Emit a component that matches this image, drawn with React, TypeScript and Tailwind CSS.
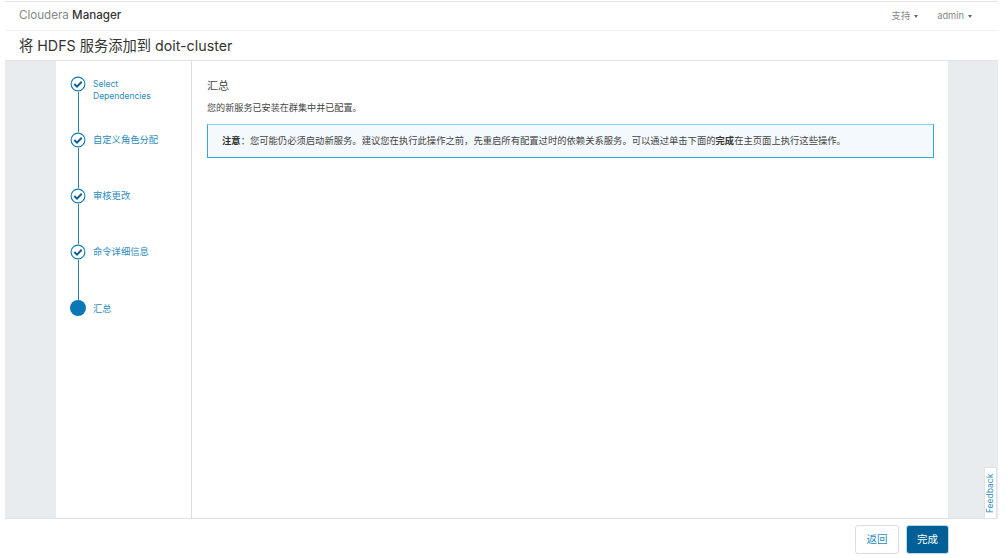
const font = { fontFamily: '"Inter", "Noto Sans CJK SC", sans-serif' };

const steps = ["Select Dependencies", "自定义角色分配", "审核更改", "命令详细信息", "汇总"];

function Check() {
  return (
    <svg width="16" height="16" viewBox="0 0 16 16" className="shrink-0">
      <circle cx="8" cy="8" r="6.9" fill="#fff" stroke="#0b7bb0" strokeWidth="1.1" />
      <path d="M4.3 8 7 10.6 11.7 5.8" fill="none" stroke="#0a5f92" strokeWidth="2" />
    </svg>
  );
}

function Caret() {
  return <span className="ml-[4px] inline-block h-0 w-0 border-x-[2.5px] border-t-[3px] border-x-transparent border-t-[#666] align-middle" />;
}

export default function App() {
  return (
    <div className="flex h-[558px] w-[1007px] flex-col overflow-hidden bg-white pl-[5px] pr-[9px] pt-[1px]" style={font}>
      <div className="flex h-[30px] shrink-0 items-center justify-between border-y border-t-[#e3e3e3] border-b-[#f0f0f0] pl-[14px] pr-[26px]">
        <div className="text-[11.6px] text-[#888]">
          Cloudera <span className="font-medium text-[#333]">Manager</span>
        </div>
        <div className="flex gap-[19px] text-[9.3px] text-[#888]">
          <span>支持<Caret /></span>
          <span>admin<Caret /></span>
        </div>
      </div>

      <div className="flex h-[30px] shrink-0 items-center border-b border-[#e2e2e2] pl-[14px] text-[14.25px] text-[#333]">
        将 HDFS 服务添加到 doit-cluster
      </div>

      <div className="relative flex min-h-0 flex-1 border-b border-[#e2e2e2] bg-[#e9ecef]">
        <div className="ml-[50px] w-[137px] shrink-0 border-x border-l-[#e9ecef] border-r-[#dcdcdc] bg-white pl-[14px] pt-[15px]">
          {steps.map((s, i) => (
            <div key={s} className="flex h-[56px] gap-[7px]">
              <div className="flex w-[16px] shrink-0 flex-col items-center">
                {i < 4 ? <Check /> : <span className="h-[16px] w-[16px] rounded-full bg-[#0a78b4]" />}
                {i < 4 && <span className="w-px flex-1 bg-[#2a7ea8]" />}
              </div>
              <div className={i === 0 ? "w-[70px] pt-[2px] text-[8.5px] leading-[12px] text-[#2b8cbc]" : i === 4 ? "w-[70px] pt-[3px] text-[9.3px] leading-[12px] text-[#2b8cbc]" : "w-[70px] pt-[2px] text-[9.3px] leading-[12px] text-[#2b8cbc]"}>{s}</div>
            </div>
          ))}
        </div>

        <div className="w-[756px] shrink-0 bg-white pl-[15px] pr-[14px] pt-[18px] text-[#444]">
          <h2 className="text-[11px] font-normal leading-[14px]">汇总</h2>
          <p className="mt-[9px] text-[9.1px] leading-[12px]">您的新服务已安装在群集中并已配置。</p>
          <div className="mt-[10px] flex h-[34px] items-center border border-[#35a8d4] border-t-[#7fd3ee] bg-[#f4f9fd] pl-[14px] text-[9.32px] text-[#444]">
            <p>
              <strong className="font-bold text-[#333]">注意</strong>：您可能仍必须启动新服务。建议您在执行此操作之前，先重启所有配置过时的依赖关系服务。可以通过单击下面的<strong className="font-bold text-[#333]">完成</strong>在主页面上执行这些操作。
            </p>
          </div>
        </div>

        <div className="absolute bottom-0 right-[1px] flex h-[51px] w-[13px] items-center justify-center rounded-tl-[2px] border border-b-0 border-[#dfe3e6] bg-white">
          <span className="rotate-[-90deg] whitespace-nowrap text-[8.5px] text-[#2b8cbc]">Feedback</span>
        </div>
      </div>

      <div className="flex h-[39px] shrink-0 items-start justify-end gap-[7px] pr-[49px] pt-[6px] text-[10.5px]">
        <button className="h-[29px] w-[44px] rounded-[3px] border border-[#ddd] bg-white text-[#2b8cbc]">返回</button>
        <button className="h-[29px] w-[43px] rounded-[3px] border border-[#b9dbe9] bg-[#005f96] text-white">完成</button>
      </div>
    </div>
  );
}
